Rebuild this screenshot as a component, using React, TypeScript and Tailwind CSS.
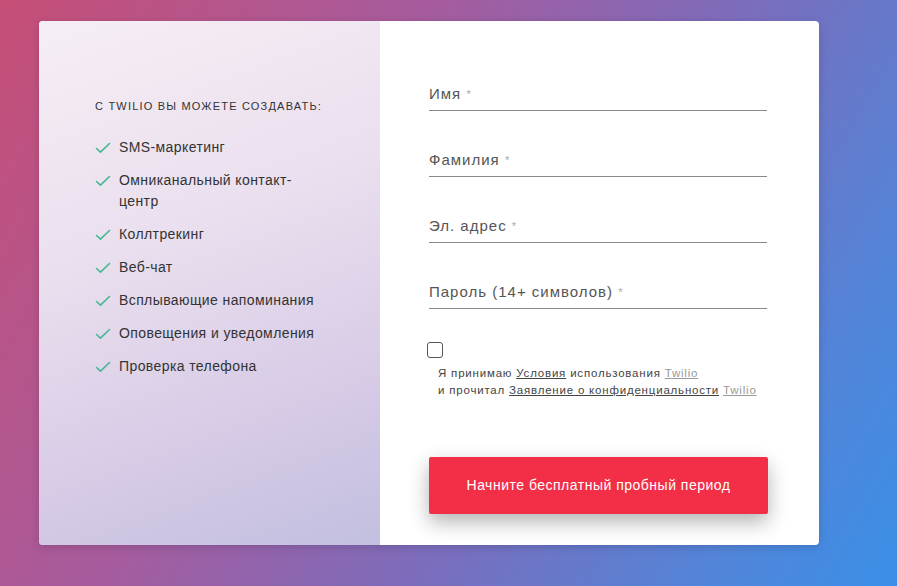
const features = [
  "SMS-маркетинг",
  "Омниканальный контакт-центр",
  "Коллтрекинг",
  "Веб-чат",
  "Всплывающие напоминания",
  "Оповещения и уведомления",
  "Проверка телефона",
];

const fields = ["Имя", "Фамилия", "Эл. адрес", "Пароль (14+ символов)"];

function Check() {
  return (
    <svg width="16" height="12" viewBox="0 0 16 12" className="shrink-0 mt-[5px]">
      <path d="M1.5 6.5 L5.5 10.2 L14.5 1.5" fill="none" stroke="#45b892" strokeWidth="1.6" strokeLinecap="round" strokeLinejoin="round" />
    </svg>
  );
}

export default function App() {
  return (
    <div
      className="h-[586px] w-full overflow-hidden pl-[39px] pt-[21px] bg-[linear-gradient(120deg,#c64f77_0%,#a65b9d_35%,#7d6cbb_60%,#5185d9_85%,#3a8fe8_100%)]"
      style={{ fontFamily: "'Liberation Sans', Arial, sans-serif" }}
    >
      <div className="flex w-[780px] h-[524px] rounded-[4px] overflow-hidden bg-white shadow-[0_2px_8px_rgba(0,0,0,0.15)]">
        <div className="w-[341px] shrink-0 pl-[56px] pt-[77px] bg-[linear-gradient(160deg,#f6eef5_0%,#eadfee_40%,#d6cae6_75%,#c2bfe0_100%)]">
          <h3 className="text-[11px] leading-[16px] uppercase tracking-[1.2px] text-[#333]">
            С Twilio вы можете создавать:
          </h3>
          <ul className="mt-[23px] flex flex-col gap-[12px] w-[226px]">
            {features.map((f) => (
              <li key={f} className="flex gap-[8px] text-[14px] leading-[21px] tracking-[0.4px] text-[#333]">
                <Check />
                <span>{f}</span>
              </li>
            ))}
          </ul>
        </div>
        <div className="flex-1 pl-[49px] pt-[63px]">
          <div className="w-[338px]">
            {fields.map((f) => (
              <div key={f} className="mb-[39px] pb-[6px] border-b border-[#8a8a8a] text-[15px] leading-[20px] tracking-[1px] text-[#555]">
                {f} <span className="text-[11px] align-top text-[#aaa]">*</span>
              </div>
            ))}
            <div className="-mt-[6px]">
              <div className="w-[16px] h-[16px] rounded-[3px] border-[1.5px] border-[#555] -ml-[2px]" />
              <p className="mt-[7px] ml-[9px] text-[11.5px] leading-[17px] tracking-[0.8px] text-[#444]">
                Я принимаю <a href="#" className="underline">Условия</a> использования{" "}
                <a href="#" className="underline text-[#999]">Twilio</a>
                <br />
                и прочитал <a href="#" className="underline">Заявление о конфиденциальности</a>{" "}
                <a href="#" className="underline text-[#999]">Twilio</a>
              </p>
            </div>
            <button className="mt-[58px] w-[339px] h-[57px] rounded-[2px] bg-[#f22f46] text-white text-[14px] tracking-[0.5px] shadow-[0_8px_20px_rgba(0,0,0,0.3)]">
              Начните бесплатный пробный период
            </button>
          </div>
        </div>
      </div>
    </div>
  );
}
